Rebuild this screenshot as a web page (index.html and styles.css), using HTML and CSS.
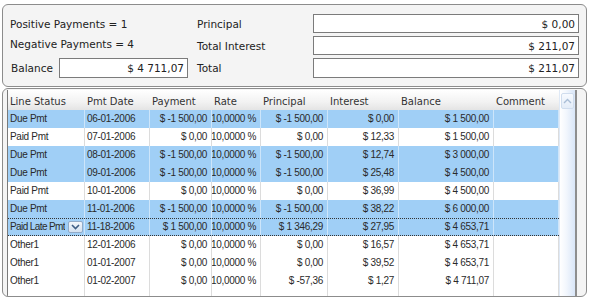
FILE: index.html
```html
<!DOCTYPE html>
<html lang="en">
<head>
  <meta charset="UTF-8" />
  <title>Payment Schedule</title>
  <link rel="stylesheet" href="styles.css">
</head>
<body>
  <div class="page">
    <div class="panel summary">
      <div class="summary-label">Positive Payments = 1</div>
      <div class="summary-label">Principal</div>
      <div class="field">$ 0,00</div>

      <div class="summary-label">Negative Payments = 4</div>
      <div class="summary-label">Total Interest</div>
      <div class="field">$ 211,07</div>

      <div class="balance">
        <span class="summary-label">Balance</span>
        <div class="field balance-field">$ 4 711,07</div>
      </div>
      <div class="summary-label">Total</div>
      <div class="field">$ 211,07</div>
    </div>

    <div class="panel grid-panel">
      <div class="grid">
        <div class="grid-body">
          <div class="row head">
            <div>Line Status</div>
            <div>Pmt Date</div>
            <div>Payment</div>
            <div>Rate</div>
            <div>Principal</div>
            <div>Interest</div>
            <div>Balance</div>
            <div>Comment</div>
          </div>

          <div class="row due">
            <div>Due Pmt</div><div>06-01-2006</div><div class="num">$ -1 500,00</div><div class="num">10,0000 %</div>
            <div class="num">$ -1 500,00</div><div class="num">$ 0,00</div><div class="num">$ 1 500,00</div><div></div>
          </div>
          <div class="row">
            <div>Paid Pmt</div><div>07-01-2006</div><div class="num">$ 0,00</div><div class="num">10,0000 %</div>
            <div class="num">$ 0,00</div><div class="num">$ 12,33</div><div class="num">$ 1 500,00</div><div></div>
          </div>
          <div class="row due">
            <div>Due Pmt</div><div>08-01-2006</div><div class="num">$ -1 500,00</div><div class="num">10,0000 %</div>
            <div class="num">$ -1 500,00</div><div class="num">$ 12,74</div><div class="num">$ 3 000,00</div><div></div>
          </div>
          <div class="row due">
            <div>Due Pmt</div><div>09-01-2006</div><div class="num">$ -1 500,00</div><div class="num">10,0000 %</div>
            <div class="num">$ -1 500,00</div><div class="num">$ 25,48</div><div class="num">$ 4 500,00</div><div></div>
          </div>
          <div class="row">
            <div>Paid Pmt</div><div>10-01-2006</div><div class="num">$ 0,00</div><div class="num">10,0000 %</div>
            <div class="num">$ 0,00</div><div class="num">$ 36,99</div><div class="num">$ 4 500,00</div><div></div>
          </div>
          <div class="row due">
            <div>Due Pmt</div><div>11-01-2006</div><div class="num">$ -1 500,00</div><div class="num">10,0000 %</div>
            <div class="num">$ -1 500,00</div><div class="num">$ 38,22</div><div class="num">$ 6 000,00</div><div></div>
          </div>
          <div class="row due focused">
            <div class="combo">
              <span class="combo-text">Paid Late Pmt</span>
              <span class="combo-btn">
                <svg width="9" height="6" viewBox="0 0 9 6"><path d="M1 1 L4.5 4.5 L8 1" fill="none" stroke="#3f5f86" stroke-width="1.6"/></svg>
              </span>
            </div>
            <div>11-18-2006</div><div class="num">$ 1 500,00</div><div class="num">10,0000 %</div>
            <div class="num">$ 1 346,29</div><div class="num">$ 27,95</div><div class="num">$ 4 653,71</div><div></div>
          </div>
          <div class="row">
            <div>Other1</div><div>12-01-2006</div><div class="num">$ 0,00</div><div class="num">10,0000 %</div>
            <div class="num">$ 0,00</div><div class="num">$ 16,57</div><div class="num">$ 4 653,71</div><div></div>
          </div>
          <div class="row">
            <div>Other1</div><div>01-01-2007</div><div class="num">$ 0,00</div><div class="num">10,0000 %</div>
            <div class="num">$ 0,00</div><div class="num">$ 39,52</div><div class="num">$ 4 653,71</div><div></div>
          </div>
          <div class="row">
            <div>Other1</div><div>01-02-2007</div><div class="num">$ 0,00</div><div class="num">10,0000 %</div>
            <div class="num">$ -57,36</div><div class="num">$ 1,27</div><div class="num">$ 4 711,07</div><div></div>
          </div>
          <div class="row filler">
            <div></div><div></div><div></div><div></div><div></div><div></div><div></div><div></div>
          </div>
        </div>

        <div class="vscroll">
          <div class="vscroll-up">
            <svg width="9" height="6" viewBox="0 0 9 6"><path d="M1 5 L4.5 1.5 L8 5" fill="none" stroke="#a9bdd6" stroke-width="1.4"/></svg>
          </div>
        </div>
      </div>
    </div>
  </div>
</body>
</html>
```

FILE: styles.css
```css
body {
  margin: 0;
  padding: 0;
  background: #ffffff;
  color: #222;
  font-family: "DejaVu Sans", Verdana, sans-serif;
  overflow: hidden;
}

.page {
  padding: 4px 2px 0;
  height: 293px;
  display: flex;
  flex-direction: column;
  gap: 1px;
}

.panel {
  background: #f4f4f4;
  border: 1px solid #8c8c8c;
  border-radius: 6px;
}

/* summary block */

.summary {
  height: 64px;
  padding: 9px 7px 8px 7px;
  display: grid;
  grid-template-columns: 187px 116px 1fr;
  grid-template-rows: 19px 19px 20px;
  row-gap: 3px;
  align-items: center;
  font-size: 10.5px;
}

.summary .summary-label:nth-child(4) {
  margin-top: -4px;
}

.field {
  height: 100%;
  box-sizing: border-box;
  background: #fff;
  border: 1px solid #7b7b7b;
  padding: 0 3px;
  display: flex;
  align-items: center;
  justify-content: flex-end;
  color: #222;
}

.balance {
  display: flex;
  align-items: center;
  gap: 6px;
  height: 100%;
  padding-left: 1px;
  margin-right: 9px;
}

.balance-field {
  flex: 1;
}

/* grid */

.grid-panel {
  flex: 1;
  overflow: hidden;
  padding: 1px 9px 0 4px;
}

.grid {
  display: flex;
  height: 100%;
  border-left: 1px solid #7a7a7a;
  border-right: 2px solid #8e8e8e;
  background: #fff;
}

.grid-body {
  display: flex;
  flex-direction: column;
  width: 551px;
  font-family: "Liberation Sans", Arial, sans-serif;
  font-size: 10px;
  letter-spacing: -0.3px;
  color: #2a2a2a;
}

.row {
  display: grid;
  grid-template-columns: 77px 65px 62px 49px 67px 71px 95px 65px;
  height: 18px;
  box-sizing: border-box;
}

.row > div {
  border-right: 1px solid #dcdcdc;
  padding: 0 2px 1px;
  display: flex;
  align-items: center;
  white-space: nowrap;
  overflow: hidden;
  line-height: 1;
}

.row > .num {
  justify-content: flex-end;
  padding-right: 4px;
}

.row.due {
  background: #a0cff6;
}

.row.due > div {
  border-right-color: #cde5fa;
}

.row.focused {
  border-top: 1px dotted #333;
  border-bottom: 1px dotted #333;
}

.row.head {
  height: 20px;
  background: linear-gradient(#ffffff, #f2f2f2 60%, #e4e4e4);
  font-family: "DejaVu Sans", Verdana, sans-serif;
  font-size: 10px;
  letter-spacing: 0;
  color: #333;
}

.row.head > div {
  border-right: none;
  padding-top: 3px;
  padding-bottom: 0;
}

.row.filler {
  flex: 1;
}

.combo {
  justify-content: space-between;
  gap: 1px;
  padding-right: 1px !important;
}

.combo-text {
  letter-spacing: -0.6px;
  overflow: hidden;
}

.combo-btn {
  flex: none;
  width: 15px;
  height: 12px;
  box-sizing: border-box;
  border: 1px solid #92abc8;
  border-radius: 2px;
  background: linear-gradient(#f2f6fb, #d3e1f0);
  display: flex;
  align-items: center;
  justify-content: center;
}

.vscroll {
  width: 16px;
  border-left: 1px solid #dfe9f6;
  background: linear-gradient(to right, #ffffff, #f3f7fd 40%, #d9e6f8);
  padding-top: 3px;
}

.vscroll-up {
  height: 14px;
  margin: 0 1px;
  border: 1px solid #d0ddee;
  border-radius: 2px;
  background: linear-gradient(#f7faff, #e3ecf8);
  display: flex;
  align-items: center;
  justify-content: center;
}
```
